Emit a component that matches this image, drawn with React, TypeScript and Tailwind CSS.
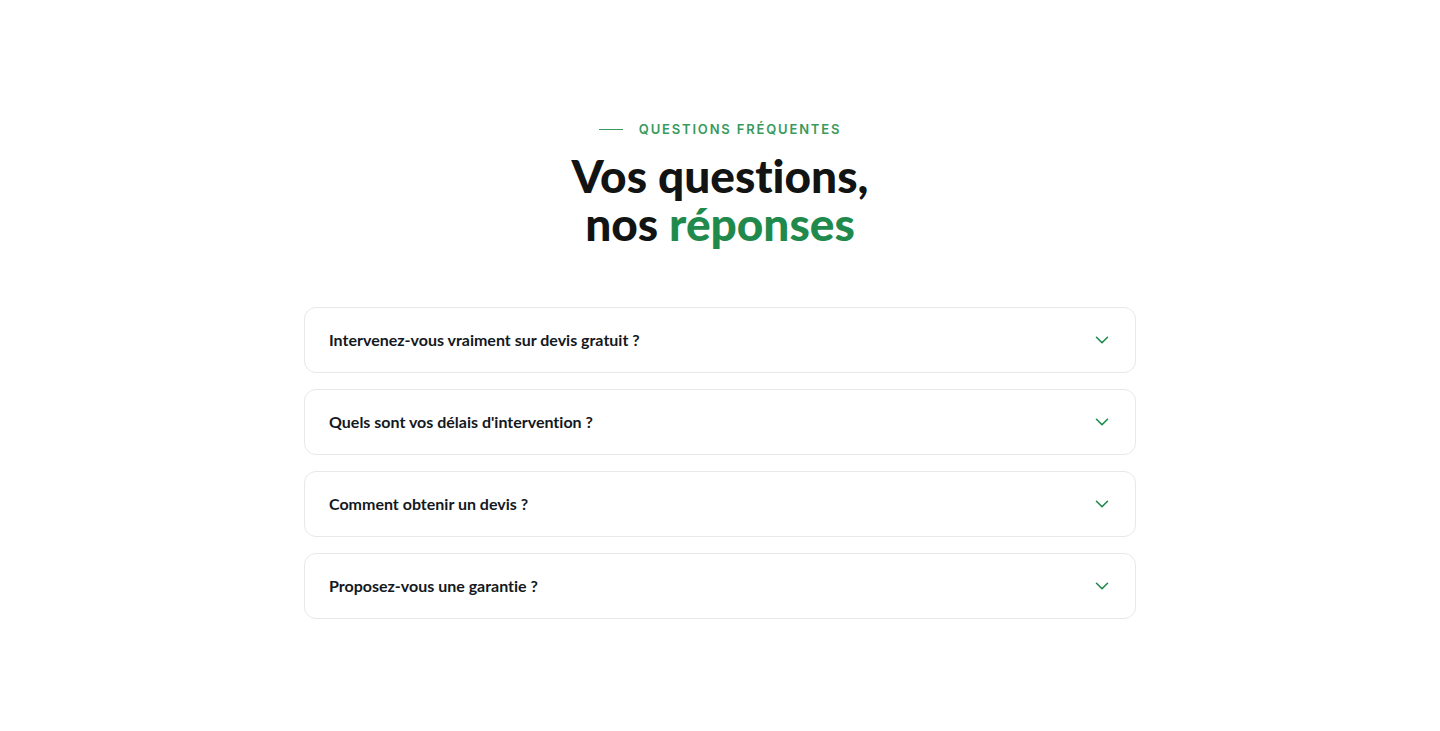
import React from 'react';
import { ChevronDown } from 'lucide-react';

const faqs = [
  'Intervenez-vous vraiment sur devis gratuit ?',
  "Quels sont vos délais d'intervention ?",
  'Comment obtenir un devis ?',
  'Proposez-vous une garantie ?',
];

export default function App() {
  return (
    <div className="min-h-[731px] bg-white px-6 pt-[120px] pb-24 font-['Lato',sans-serif] [font-variant-ligatures:none]">
      <div className="mx-auto max-w-[832px]">
        {/* Header */}
        <div className="flex flex-col items-center text-center">
          <div className="flex items-center gap-4">
            <span className="h-px w-6 bg-[#3a9a5e]" />
            <span className="font-['Inter',sans-serif] text-[13px] font-semibold uppercase tracking-[0.14em] text-[#3a9a5e]">
              Questions fréquentes
            </span>
          </div>
          <h2 className="mt-[12px] text-[46px] font-black leading-[48px] text-[#111412]">
            Vos questions,
            <br />
            nos <span className="text-[#1f8a4c]">réponses</span>
          </h2>
        </div>

        {/* Accordion */}
        <div className="mt-[59px] flex flex-col gap-4">
          {faqs.map((q) => (
            <button
              key={q}
              className="flex h-[66px] w-full items-center justify-between rounded-xl border border-[#e8e8e8] bg-white pl-6 pr-[22px] text-left"
            >
              <span className="text-[16px] font-bold text-[#141821]">{q}</span>
              <ChevronDown className="h-[22px] w-[22px] text-[#1f8a4c]" strokeWidth={1.75} />
            </button>
          ))}
        </div>
      </div>
    </div>
  );
}
